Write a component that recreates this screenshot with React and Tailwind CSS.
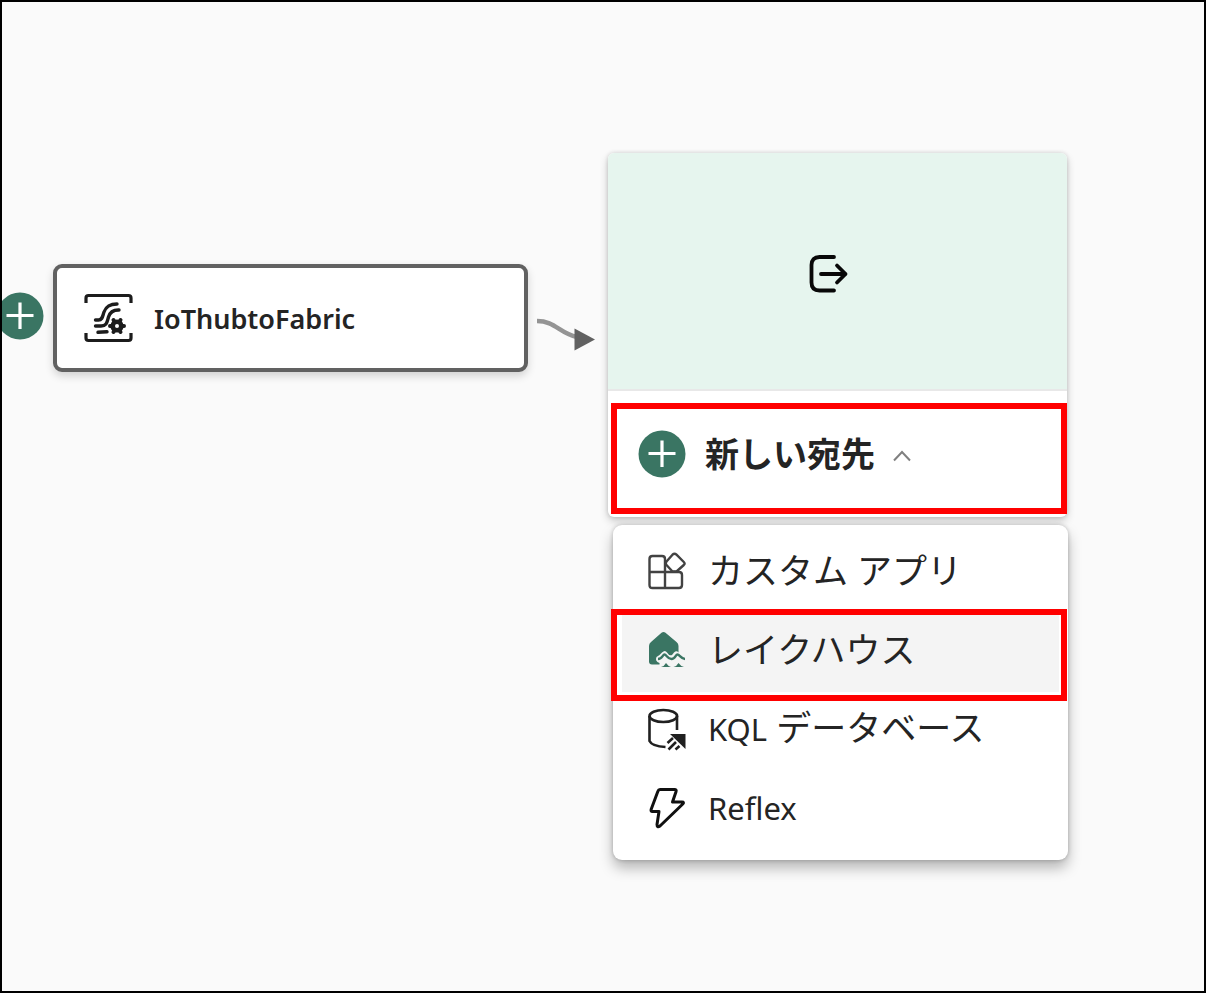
import React from 'react';

function PlusBadge() {
  return (
    <svg viewBox="0 0 48 48" className="size-12 shrink-0" aria-hidden="true">
      <circle cx="24" cy="24" r="23.5" fill="#3a7563" />
      <path d="M24 10.5v26.500M10.5 23.5h27" stroke="#fff" strokeWidth="3.2" fill="none" />
    </svg>
  );
}

function EventstreamIcon() {
  return (
    <svg viewBox="0 0 50 50" className="size-[50px] shrink-0" fill="none" stroke="#1c1c1c" strokeLinecap="round" aria-hidden="true">
      <path d="M2 10V5Q2 2.500 4.500 2.500H44.500Q47 2.500 47 5V10M2 40V45Q2 47.500 4.500 47.500H44.500Q47 47.500 47 45V40" strokeWidth="3.200" strokeLinecap="butt" />
      <path d="M11.500 27H14.500C18.500 27 18.500 23 20 19C22 14 25 11 33 11" strokeWidth="3.400" />
      <path d="M11.500 33H17C23 33 23 29 24.500 24C26 19 29 16.800 35 17" strokeWidth="3.400" />
      <path d="M14 39.300L23 38.800" strokeWidth="3.400" />
      <g transform="translate(33 33)">
        <circle r="4.300" strokeWidth="4.600" />
        <path d="M-7 0H-6.300M6.300 0H7M-3.500 -6L-3.200 -5.500M3.200 5.500L3.500 6M3.500 -6L3.200 -5.500M-3.200 5.500L-3.500 6" strokeWidth="4" />
      </g>
    </svg>
  );
}

function ExportIcon() {
  return (
    <svg viewBox="0 0 40 40" className="size-10" fill="none" stroke="#080808" strokeWidth="3.800" strokeLinecap="round" strokeLinejoin="round" aria-hidden="true">
      <path d="M25 3H10.500Q2.500 3 2.500 11V28.500Q2.500 36.500 10.500 36.500H25" />
      <path d="M12 20H36.500M28 11.500L36.500 20L28 28.500" />
    </svg>
  );
}

function AppsIcon() {
  return (
    <svg viewBox="0 0 40 40" className="size-10 shrink-0" fill="none" stroke="#424242" strokeWidth="2.400" strokeLinejoin="round" aria-hidden="true">
      <path d="M5.500 5H15Q18 5 18 8V21H32Q35 21 35 24V34Q35 37 32 37H5.500Q2.500 37 2.500 34V8Q2.500 5 5.500 5ZM2.500 21H18V37" />
      <path d="M25.500 3.700Q27.500 1.700 29.500 3.700L36.800 11Q38.300 12.500 36.800 14L29.500 20.500H25.500L19.500 14Q18 12.500 19.500 10.500Z" />
    </svg>
  );
}

function LakehouseIcon() {
  return (
    <svg viewBox="0 0 40 40" className="size-10 shrink-0" aria-hidden="true">
      <path d="M14.500 2.800Q16.500 1 18.500 2.800L29.500 12Q31.500 13.500 31.500 16V22.500Q29.500 20 27 22.500L25 25Q22 26 20 22.500Q18 19.500 15 22.500Q12 26 9.500 27Q7.500 31 12.500 33V34.500H5Q2 34.500 2 31.500V16Q2 13.500 4 12Z" fill="#3a7563" />
      <path d="M11 29C15.500 29 15.500 24.500 17.500 24.500S20.500 29 24.500 29S28.500 24.500 30.500 24.500S34 29 38 29" fill="none" stroke="#3a7563" strokeWidth="2.400" />
      <path d="M14 37Q17.500 36 19 33Q21 36 24 37ZM26.500 37Q30 36 31.500 33Q33.500 36 37 37Z" fill="#3a7563" />
    </svg>
  );
}

function DatabaseIcon() {
  return (
    <svg viewBox="0 0 40 44" className="h-11 w-10 shrink-0" fill="none" stroke="#202020" strokeWidth="2.600" aria-hidden="true">
      <ellipse cx="16.300" cy="9" rx="13.800" ry="6" />
      <path d="M2.500 9V34Q5 39.300 18.500 40M30 9V23" />
      <path d="M23 27H38.500V42Z" fill="#202020" stroke="none" />
      <path d="M20.500 36L26 31M21.500 42.500L29 35M28.500 42.500L32.500 39" strokeWidth="2.600" />
    </svg>
  );
}

function BoltIcon() {
  return (
    <svg viewBox="0 0 40 44" className="h-11 w-10 shrink-0" fill="none" stroke="#101010" strokeWidth="3" strokeLinejoin="round" aria-hidden="true">
      <path d="M13 3.500H27.500Q29.800 3.500 29 5.800L25.500 16H35Q37.500 16 35.800 18L13 40Q10 42 10 38.500L12 25.500H5.500Q3.500 25.500 4.200 23.200L11 5Q11.500 3.500 13 3.500Z" />
    </svg>
  );
}

const destinations = [
  { icon: AppsIcon, name: 'カスタム アプリ' },
  { icon: LakehouseIcon, name: 'レイクハウス', active: true },
  { icon: DatabaseIcon, latin: 'KQL', name: ' データベース' },
  { icon: BoltIcon, latin: 'Reflex' },
];

function DestinationMenu() {
  return (
    <ul className="absolute left-[611px] top-[523px] w-[455px] rounded-[9px] bg-white px-[9px] pt-[9px] pb-[10px] shadow-[0_8px_14px_rgba(0,0,0,0.28),0_0_4px_rgba(0,0,0,0.22)]">
      {destinations.map(({ icon: Icon, latin, name, active }) => (
        <li key={latin || name} className="relative">
          <button
            type="button"
            className={`flex h-[79px] w-full items-center gap-[21px] pb-[6px] pl-[25px] text-left text-[35px] leading-10 whitespace-pre text-[#242424] ${active ? 'bg-[#f4f4f4]' : ''}`}
          >
            <Icon />
            <span>
              {latin && <span className="text-[31px]">{latin}</span>}
              {name}
            </span>
          </button>
          {active && (
            <span className="pointer-events-none absolute -left-[11px] -right-2 -top-1 -bottom-[9px] z-10 border-6 border-[#ff0000]" />
          )}
        </li>
      ))}
    </ul>
  );
}

export default function App() {
  return (
    <main className="relative min-h-screen overflow-hidden border-2 border-black bg-[#fafafa] font-['Noto_Sans','Noto_Sans_CJK_JP',sans-serif]">
      <button type="button" aria-label="追加" className="absolute -left-[6px] top-[290px]">
        <PlusBadge />
      </button>

      <section className="absolute left-[51px] top-[262px] flex h-[108px] w-[475px] items-center gap-[20px] rounded-[9px] border-4 border-[#616161] bg-white pl-[27px] shadow-[0_4px_8px_rgba(0,0,0,0.16)]">
        <EventstreamIcon />
        <h2 className="pt-[2px] text-[27px] font-semibold leading-9 text-[#242424]">IoThubtoFabric</h2>
      </section>

      <svg viewBox="0 0 60 40" className="absolute left-[535px] top-[312px] h-10 w-[60px]" aria-hidden="true">
        <path d="M0 7C18 7 22 19 40 23" fill="none" stroke="#949494" strokeWidth="4.500" />
        <path d="M37.500 14.500L58 25.500L37.500 36.500Z" fill="#616161" />
      </svg>

      <section className="absolute left-[606px] top-[151px] w-[459px] rounded-[6px] bg-white shadow-[0_4px_8px_rgba(0,0,0,0.2),0_0_4px_rgba(0,0,0,0.14)]">
        <div className="flex h-[238px] items-center justify-center rounded-t-[6px] border-b-2 border-[#e8e8e8] bg-[#e6f5ee] pt-[6px] pr-[18px]">
          <ExportIcon />
        </div>
        <button type="button" aria-expanded="true" className="flex h-[126px] w-full items-center gap-[19px] pl-[30px]">
          <PlusBadge />
          <span className="flex items-center gap-[18px]">
            <span className="text-[34px] font-bold leading-10 text-[#242424]">新しい宛先</span>
            <svg viewBox="0 0 18 12" className="mt-1 h-3 w-[18px]" fill="none" stroke="#808080" strokeWidth="2" aria-hidden="true">
              <path d="M1 10.500L9 2L17 10.500" />
            </svg>
          </span>
        </button>
        <span className="pointer-events-none absolute left-[3px] right-0 top-[250px] bottom-[3px] border-6 border-[#ff0000]" />
      </section>

      <DestinationMenu />
    </main>
  );
}
